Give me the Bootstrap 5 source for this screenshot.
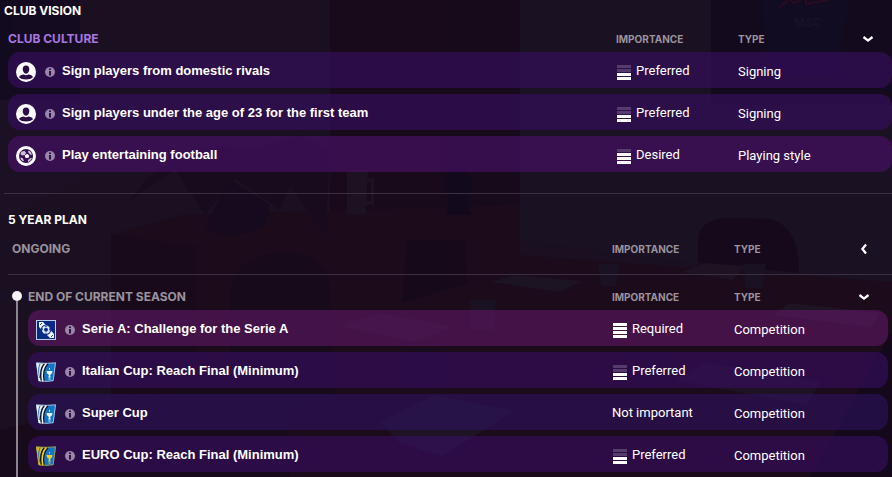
<!DOCTYPE html>
<html lang="en">
<head>
<meta charset="utf-8">
<meta name="viewport" content="width=device-width, initial-scale=1">
<title>Club Vision</title>
<link href="https://cdn.jsdelivr.net/npm/bootstrap@5.3.0/dist/css/bootstrap.min.css" rel="stylesheet">
<style>
  body { background: #1a0f20; color: #fff; font-family: Roboto, "Liberation Sans", sans-serif; font-size: 13px; line-height: 16px; }
  .scene { position: absolute; inset: 0; z-index: -1; }
  .heading { font-family: Inter, "Liberation Sans", sans-serif; font-size: 12px; line-height: 14px; font-weight: 700; margin: 0; }
  .page { padding: 4px 0 0 4px; }
  .plan { padding: 0 4px; }
  .rule { height: 1px; margin: 0; border: 0; opacity: 1; background: #3b3041; }
  .rule-main { margin: 15px 0 19px; }
  .rule-plan { margin: 12px -4px 0 0; }
  .goals { width: 100%; margin-top: 3px; table-layout: fixed; border-collapse: separate; border-spacing: 0 6px; }
  .culture { margin-top: 2px; }
  .seasons { margin-bottom: -6px; }
  .goals th { padding: 6px 0 0; text-align: left; color: #9b939e; }
  .goals .heading-accent { color: #a877e0; }
  .col-importance { width: 122px; }
  .col-type { width: 154px; }
  .goals .col-label { font-family: Inter, "Liberation Sans", sans-serif; font-size: 10px; line-height: 12px; font-weight: 700; }
  .goals tbody td { height: 36px; padding: 2px 0 0; vertical-align: middle; background: var(--tone); }
  .goals tbody td:first-child { padding: 4px 0 0 8px; border-radius: 12px 0 0 12px; }
  .goals tbody td:last-child { padding-top: 4px; border-radius: 0 12px 12px 0; }
  .tone-preferred { --tone: rgba(56, 14, 100, .6); }
  .tone-desired { --tone: rgba(76, 16, 110, .6); }
  .tone-required { --tone: rgba(96, 24, 103, .6); }
  .tone-minor { --tone: rgba(46, 19, 97, .6); }
  .goal-name { font-family: "Liberation Sans", Arial, sans-serif; font-weight: 700; padding-bottom: 3px; }
  .goal-icon { width: 20px; height: 20px; flex: none; margin-right: 9px; }
  .info-btn { display: flex; padding: 0; border: 0; background: none; margin-right: 7px; }
  .toggle-btn { display: flex; padding: 0; border: 0; background: none; margin-right: 18px; }
  .level { width: 14px; height: 15px; margin: 2px 5px 0 1px; flex: none; }
  .rail { width: 10px; padding-top: 16px; margin: 0 6px 0 4px; }
  .rail-dot { width: 10px; height: 10px; border-radius: 50%; background: #f4f2f5; }
  .rail-line { width: 2px; background: #8c8590; }
  .cup-silver { --cup-side: #e8eef2; --cup-mark: #eaf4fb; }
  .cup-gold { --cup-side: #d8b91c; --cup-mark: #f0d02a; }
</style>
</head>
<body class="position-relative">
<svg class="scene w-100 h-100" viewBox="0 0 892 477" preserveAspectRatio="xMidYMid slice" aria-hidden="true">
  <rect width="892" height="477" fill="#1b1022"/>
  <path d="M0 0H80V100H0Z" fill="#150b21"/>
  <path d="M0 0H12V78H0Z" fill="#120a1f"/>
  <path d="M0 100H80V180L0 220Z" fill="#1b1024"/>
  <path d="M330 0H441V240H330Z" fill="#190a1b"/>
  <path d="M441 0H520V220H441Z" fill="#170a1b"/>
  <path d="M520 0H892V290L520 240Z" fill="#1a1122"/>
  <path d="M711 0H892V105H711Z" fill="#140a1d"/>
  <path d="M762 0H848L838 75H768Z" fill="#120c22"/>
  <path d="M780 7l10-9 3 5 13-5 0 6 22-4" fill="none" stroke="#2a0b1f" stroke-width="2"/>
  <text x="794" y="27" font-family="Inter, sans-serif" font-size="12" font-weight="700" fill="#191127">MSC</text>
  <path d="M111 235L180 215 520 205V255L892 282V477H111Z" fill="#1c0c1b"/>
  <path d="M111 235L196 246V477H111Z" fill="#180a1a"/>
  <path d="M0 430L290 365V477H0Z" fill="#170a1a"/>
  <path d="M130 200Q180 130 250 150L300 135 330 150 325 235 290 185 280 210 235 178 205 215 175 170Z" fill="#170b1d"/>
  <path d="M205 225L230 180 270 205 265 225Q240 240 210 232Z" fill="#150a1e"/>
  <path d="M347 170H368L366 214H347ZM368 178H374V205H366V201H371V182H367Z" fill="#1c1222"/>
  <circle cx="458" cy="184" r="15" fill="#120a1c"/>
  <path d="M450 196H466L471 215H446Z" fill="#120a1c"/>
  <path d="M230 290Q238 252 285 253T330 300L334 400 230 420Z" fill="#170a1a"/>
  <path d="M407 240H465L467 283 402 303Z" fill="#15091a"/>
  <path d="M698 263V240Q700 219 727 218L770 219Q799 226 799 273Z" fill="#16091c"/>
  <path d="M491 282L515 275 582 281 560 292Z" fill="#1c1323"/>
  <path d="M682 272L705 263 745 266 733 280Z" fill="#1d1322"/>
  <path d="M340 326L380 313 453 327 415 342Z" fill="#1f1323"/>
  <path d="M380 422L435 395 513 411 443 456 400 443Z" fill="#1f1425"/>
  <path d="M675 380L705 363 820 382 807 405Z" fill="#1e1324"/>
  <path d="M773 315L790 303 880 313 870 327Z" fill="#1e1424"/>
  <g fill="#1a1122"><path d="M598 264H619L616 286H601ZM743 264H766L762 288H746ZM470 300H496L494 330H471Z"/></g>
  <g fill="#180b1c"><path d="M408 348H438L436 386H409ZM635 352H665V390H637Z"/></g>
  <path d="M892 330V477H810Z" fill="#13091b"/>
</svg>

<svg width="0" height="0" class="position-absolute" aria-hidden="true">
  <defs>
    <symbol id="icon-player" viewBox="0 0 20 20">
      <circle cx="10" cy="10" r="10" fill="#fff"/>
      <path d="M10 3.400c2.200 0 3.300 1.500 3.300 3.700 0 2.600-1.300 4.600-3.300 4.600S6.700 9.700 6.700 7.100C6.700 4.900 7.800 3.400 10 3.400Z" fill="#2b0e48"/>
      <path d="M3 15.200c.6-1.900 2.600-2.300 4.900-2.700 1 .9 3.200.9 4.200 0 2.300.4 4.300.8 4.900 2.700-1.700 1.600-4 2.200-7 2.200s-5.300-.6-7-2.200Z" fill="#2b0e48"/>
    </symbol>
    <symbol id="icon-ball" viewBox="0 0 20 20">
      <circle cx="10" cy="10" r="10" fill="#fff"/>
      <circle cx="10" cy="10" r="7" fill="#370f4e"/>
      <path d="M5.500 5.500L8.500 5 10 6.500 9 9 6 9.500 4.500 8ZM12.500 4.500l2.500 1.500 1 3-2-.5-2-2.500ZM4.500 11.500l2 .5 1.500 2.500-1 .8-2-1.500ZM12 14l2.500-2 1.500 0-1.500 2.500-2.500 1.500Z" fill="#cfc3d6"/>
      <path d="M11 7.800l2.300 1.700-.9 2.600H9.600l-.9-2.600Z" fill="#fff"/>
    </symbol>
    <symbol id="icon-info" viewBox="0 0 10 10">
      <circle cx="5" cy="5" r="5" fill="#9a86a8"/>
      <path d="M4 1.500h2v1.500H4ZM4 4h2v4.500H4Z" fill="#310f49"/>
    </symbol>
    <symbol id="icon-serie" viewBox="0 0 20 20">
      <rect width="20" height="20" fill="#b9d0ea"/>
      <rect x="1" y="1" width="18" height="18" fill="#0b2a86"/>
      <path d="M3 2h4l11 12v4h-4L3 7Z" fill="#f2f6fb"/>
      <path d="M4 5l2-2M15 17l2-2" stroke="#39405c" stroke-width="1"/>
      <circle cx="10" cy="9.700" r="5.200" fill="#0b2a86"/>
      <circle cx="10" cy="9.700" r="4.200" fill="#dce8f6"/>
      <path d="M10 7.600l2.100 1.500-.8 2.500H8.700l-.8-2.500ZM6 8l1 1-1 2ZM14 8l-1 1 1 2ZM8.500 6h3l-1.500 1ZM8.500 13.500h3L10 12.500Z" fill="#0b2a86"/>
    </symbol>
    <symbol id="icon-cup" viewBox="0 0 20 20">
      <path d="M0 .5Q10 1.500 20 .5L17.500 19Q10 20.500 2.500 19Z" fill="#1674c4"/>
      <path d="M.3 1Q5 1.600 10 1.500 3.500 8 5 19.500L2.700 19Z" fill="var(--cup-side)"/>
      <path d="M4 2Q1.500 7 3.500 16" fill="none" stroke="#1674c4" stroke-width="1"/>
      <path d="M8.500 1.500Q3 8 5.500 19.400M12 1.500Q5.500 8 8 19.500" fill="none" stroke="#10131f" stroke-width="1.600"/>
      <path d="M10.300 1.500Q4.500 8 6.800 19.500" fill="none" stroke="var(--cup-mark)" stroke-width="1.500"/>
      <path d="M10.500 9h6l-.5 2.300-1.500 1.200-.4 1.500 1 1.500h-3.200l1-1.500-.4-1.500L11 11.300Z" fill="var(--cup-mark)"/>
      <path d="M13 6h1v1.500h-1ZM12.500 16.500h2v1h-2Z" fill="var(--cup-mark)"/>
      <path d="M.5 .8Q10 1.800 19.500 .8L17.200 18.700Q10 20 2.800 18.700Z" fill="none" stroke="var(--cup-side)" stroke-width="1" opacity=".65"/>
    </symbol>
    <symbol id="icon-down" viewBox="0 0 12 8"><path d="M1.500 2L6 5.600 10.500 2" fill="none" stroke="#fff" stroke-width="2.300"/></symbol>
    <symbol id="icon-left" viewBox="0 0 12 12"><path d="M8 1.500L4.400 6 8 10.500" fill="none" stroke="#fff" stroke-width="2.300"/></symbol>
    <symbol id="level-2" viewBox="0 0 14 15"><path d="M0 0h14v3H0ZM0 4h14v3H0Z" fill="#563c6d"/><path d="M0 8h14v3H0ZM0 12h14v3H0Z" fill="#fff"/></symbol>
    <symbol id="level-3" viewBox="0 0 14 15"><path d="M0 0h14v3H0Z" fill="#563c6d"/><path d="M0 4h14v3H0ZM0 8h14v3H0ZM0 12h14v3H0Z" fill="#fff"/></symbol>
    <symbol id="level-4" viewBox="0 0 14 15"><path d="M0 0h14v3H0ZM0 4h14v3H0ZM0 8h14v3H0ZM0 12h14v3H0Z" fill="#fff"/></symbol>
  </defs>
</svg>

<main class="page min-vh-100 d-flex flex-column">
  <section>
    <h1 class="heading">CLUB VISION</h1>
    <div class="ps-1">
      <table class="goals culture">
        <colgroup><col><col class="col-importance"><col class="col-type"></colgroup>
        <thead>
          <tr>
            <th scope="col" class="heading heading-accent">CLUB CULTURE</th>
            <th scope="col" class="col-label">IMPORTANCE</th>
            <th scope="col" class="col-label"><div class="d-flex justify-content-between align-items-center">TYPE
              <button type="button" class="toggle-btn" aria-label="Collapse club culture"><svg width="12" height="8"><use href="#icon-down"/></svg></button></div></th>
          </tr>
        </thead>
        <tbody>
          <tr class="tone-preferred">
            <td><div class="d-flex align-items-center"><svg class="goal-icon"><use href="#icon-player"/></svg><button type="button" class="info-btn" aria-label="Details"><svg width="10" height="10"><use href="#icon-info"/></svg></button><span class="goal-name">Sign players from domestic rivals</span></div></td>
            <td><div class="d-flex"><svg class="level"><use href="#level-2"/></svg>Preferred</div></td>
            <td>Signing</td>
          </tr>
          <tr class="tone-preferred">
            <td><div class="d-flex align-items-center"><svg class="goal-icon"><use href="#icon-player"/></svg><button type="button" class="info-btn" aria-label="Details"><svg width="10" height="10"><use href="#icon-info"/></svg></button><span class="goal-name">Sign players under the age of 23 for the first team</span></div></td>
            <td><div class="d-flex"><svg class="level"><use href="#level-2"/></svg>Preferred</div></td>
            <td>Signing</td>
          </tr>
          <tr class="tone-desired">
            <td><div class="d-flex align-items-center"><svg class="goal-icon"><use href="#icon-ball"/></svg><button type="button" class="info-btn" aria-label="Details"><svg width="10" height="10"><use href="#icon-info"/></svg></button><span class="goal-name">Play entertaining football</span></div></td>
            <td><div class="d-flex"><svg class="level"><use href="#level-3"/></svg>Desired</div></td>
            <td>Playing style</td>
          </tr>
        </tbody>
      </table>
    </div>
  </section>
  <hr class="rule rule-main">
  <section class="plan flex-grow-1 d-flex flex-column">
    <h2 class="heading">5 YEAR PLAN</h2>
    <div class="ps-1">
      <table class="goals">
        <colgroup><col><col class="col-importance"><col class="col-type"></colgroup>
        <thead>
          <tr>
            <th scope="col" class="heading">ONGOING</th>
            <th scope="col" class="col-label">IMPORTANCE</th>
            <th scope="col" class="col-label"><div class="d-flex justify-content-between align-items-center">TYPE
              <button type="button" class="toggle-btn" aria-label="Expand ongoing"><svg width="12" height="12"><use href="#icon-left"/></svg></button></div></th>
          </tr>
        </thead>
      </table>
    </div>
    <hr class="rule rule-plan">
    <div class="d-flex flex-grow-1">
      <div class="rail d-flex flex-column align-items-center flex-shrink-0">
        <span class="rail-dot"></span>
        <span class="rail-line flex-grow-1"></span>
      </div>
      <div class="flex-grow-1">
        <table class="goals seasons">
          <colgroup><col><col class="col-importance"><col class="col-type"></colgroup>
          <thead>
            <tr>
              <th scope="col" class="heading">END OF CURRENT SEASON</th>
              <th scope="col" class="col-label">IMPORTANCE</th>
              <th scope="col" class="col-label"><div class="d-flex justify-content-between align-items-center">TYPE
                <button type="button" class="toggle-btn" aria-label="Collapse current season"><svg width="12" height="8"><use href="#icon-down"/></svg></button></div></th>
            </tr>
          </thead>
          <tbody>
            <tr class="tone-required">
              <td><div class="d-flex align-items-center"><svg class="goal-icon"><use href="#icon-serie"/></svg><button type="button" class="info-btn" aria-label="Details"><svg width="10" height="10"><use href="#icon-info"/></svg></button><span class="goal-name">Serie A: Challenge for the Serie A</span></div></td>
              <td><div class="d-flex"><svg class="level"><use href="#level-4"/></svg>Required</div></td>
              <td>Competition</td>
            </tr>
            <tr class="tone-preferred">
              <td><div class="d-flex align-items-center"><svg class="goal-icon cup-silver"><use href="#icon-cup"/></svg><button type="button" class="info-btn" aria-label="Details"><svg width="10" height="10"><use href="#icon-info"/></svg></button><span class="goal-name">Italian Cup: Reach Final (Minimum)</span></div></td>
              <td><div class="d-flex"><svg class="level"><use href="#level-2"/></svg>Preferred</div></td>
              <td>Competition</td>
            </tr>
            <tr class="tone-minor">
              <td><div class="d-flex align-items-center"><svg class="goal-icon cup-silver"><use href="#icon-cup"/></svg><button type="button" class="info-btn" aria-label="Details"><svg width="10" height="10"><use href="#icon-info"/></svg></button><span class="goal-name">Super Cup</span></div></td>
              <td>Not important</td>
              <td>Competition</td>
            </tr>
            <tr class="tone-preferred">
              <td><div class="d-flex align-items-center"><svg class="goal-icon cup-gold"><use href="#icon-cup"/></svg><button type="button" class="info-btn" aria-label="Details"><svg width="10" height="10"><use href="#icon-info"/></svg></button><span class="goal-name">EURO Cup: Reach Final (Minimum)</span></div></td>
              <td><div class="d-flex"><svg class="level"><use href="#level-2"/></svg>Preferred</div></td>
              <td>Competition</td>
            </tr>
          </tbody>
        </table>
      </div>
    </div>
  </section>
</main>
<script src="https://cdn.jsdelivr.net/npm/bootstrap@5.3.0/dist/js/bootstrap.bundle.min.js"></script>
</body>
</html>
